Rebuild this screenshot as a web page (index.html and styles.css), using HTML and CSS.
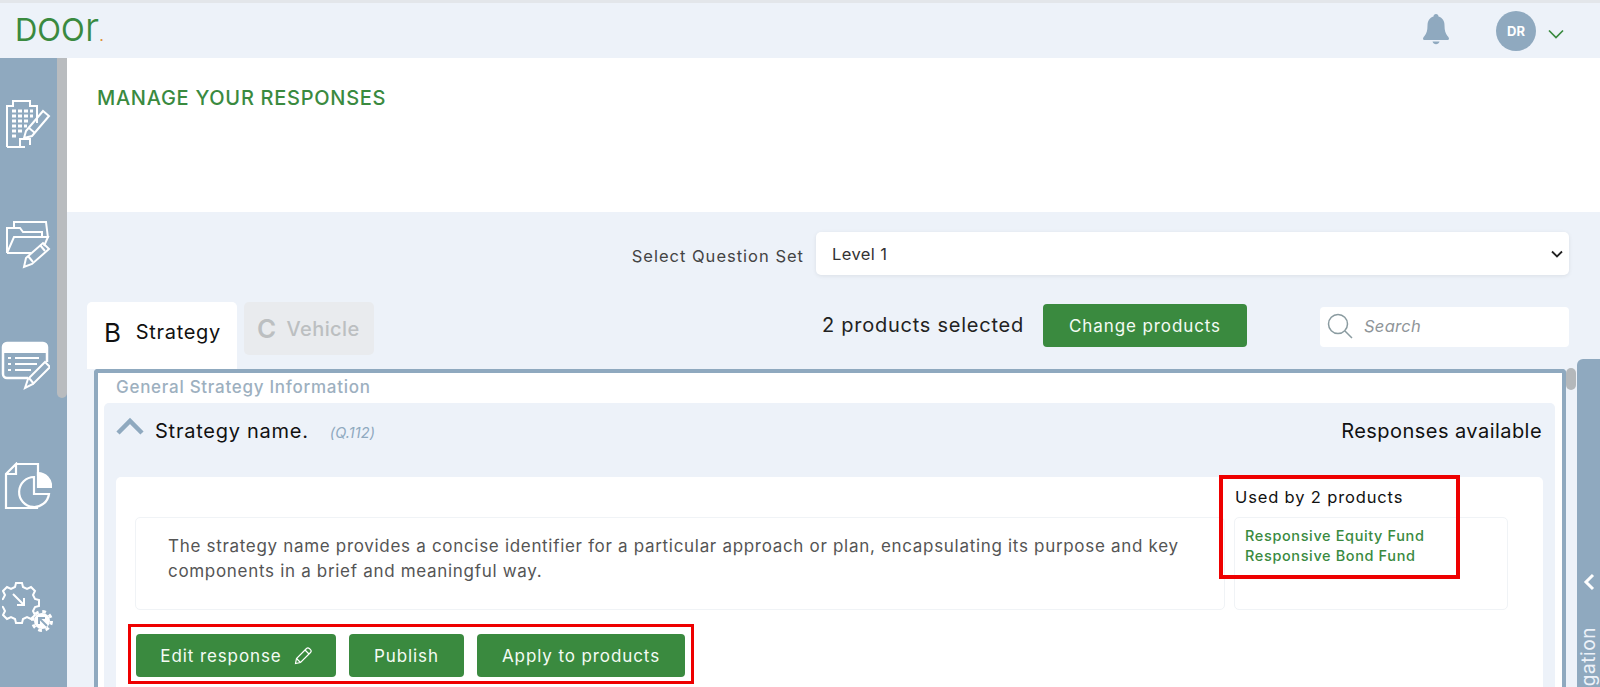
FILE: index.html
```html
<!DOCTYPE html>
<html lang="en">
<head>
<meta charset="utf-8">
<title>Manage your responses</title>
<link rel="stylesheet" href="styles.css">
</head>
<body>
<div class="app">
  <header class="topbar">
    <div class="logo">DOO<span class="logo-r">r</span><span class="logo-dot">.</span></div>
    <div class="top-right">
      <svg class="bell" viewBox="0 0 28 32" width="28" height="32"><path fill="#8fa9bf" d="M14 1c-1.500 0-2.500 1-2.500 2.600C7.500 4.800 5.500 8 5.500 12.500c0 5-1 8-3 10.500-1 1.300-1.500 2-1.500 2.700C1 26.500 1.700 27 3 27h22c1.300 0 2-.5 2-1.300 0-.7-.5-1.400-1.500-2.700-2-2.500-3-5.500-3-10.500 0-4.500-2-7.700-6-8.900C16.500 2 15.500 1 14 1z"/><path fill="#8fa9bf" d="M10.500 28.500h7c-.5 1.700-2 2.800-3.500 2.800s-3-1.100-3.500-2.800z"/></svg>
      <div class="avatar">DR</div>
      <svg class="caret" viewBox="0 0 16 10" width="16" height="10"><path d="M1 1.500l7 7 7-7" fill="none" stroke="#3a8a3f" stroke-width="1.700"/></svg>
    </div>
  </header>
  <div class="body-row">
    <nav class="sidebar">
      <div class="icons">
        <svg viewBox="0 0 46 50" width="46" height="50" fill="none" stroke="#fff" stroke-width="2"><path d="M2 48V7h6V2h17v5h7v17M20 48H2M15 48v-8h10v6"/><path d="M7 12h4M13 12h4M19 12h4M25 12h3M7 17h4M13 17h4M19 17h4M25 17h3M7 22h4M13 22h4M19 22h4M7 27h4M13 27h4M19 27h3M7 32h4M13 32h4M7 37h4" stroke-width="3"/><path d="M21 32L38 12l6 5-17 20-8 2z"/><path d="M24 29l6 5"/></svg>
        <svg viewBox="0 0 46 50" width="46" height="50" fill="none" stroke="#fff" stroke-width="2"><path d="M2 33V8h13l3 4h19v6"/><path d="M2 33h24M9 7V2h32l2 16"/><path d="M2 33l7-16h34l-4 9"/><path d="M19 47l2-9 17-15 6 6-17 15z"/><path d="M23 36l5 6M35 25l5 6"/></svg>
        <svg class="icon-list" viewBox="0 0 50 50" width="50" height="50" fill="none" stroke="#fff" stroke-width="2"><path d="M28 37H7a4 4 0 0 1-4-4V6a4 4 0 0 1 4-4h36a4 4 0 0 1 4 4v15" stroke-width="2.500"/><path d="M4 3h42v9H4z" fill="#fff" stroke="none"/><path d="M8 17h3M8 23h3M8 29h3M15 17h24M15 23h22M15 29h16" stroke-width="2.200"/><path d="M25 47l3-9 17-17 5 5-17 17z"/><path d="M29 37l5 6"/></svg>
        <svg viewBox="0 0 48 48" width="48" height="48" fill="none" stroke="#fff" stroke-width="2.200"><path d="M12 2h22v12M33 36v10H2V12L12 2v10H2"/><path d="M30 15a15 15 0 1 0 15 17H30z" fill="#8fa9bf"/><path d="M34 11a13 13 0 0 1 13 14H34z" fill="#fff" stroke="#fff"/></svg>
        <svg viewBox="0 0 52 52" width="52" height="52" fill="none" stroke="#fff" stroke-width="2"><path d="M14 2h6l1 4 4 2 4-2 4 4-2 4 2 4 4 1v6l-4 1-2 4 2 4-4 4-4-2-4 2-1 4h-6l-1-4-4-2-4 2-4-4 2-4-2-4-4-1v-6l4-1 2-4-2-4 4-4 4 2 4-2z"/><path d="M11 13l11 11M22 17v7h-7"/><circle cx="40" cy="40" r="8" fill="#fff" stroke="none"/><circle cx="40" cy="40" r="9.500" stroke="#fff" stroke-width="3" stroke-dasharray="3.730 3.730"/><path d="M45 45l-8-8M37 43v-6h6" stroke="#8fa9bf"/></svg>
      </div>
      <div class="side-scroll"><div class="side-thumb"></div></div>
    </nav>
    <main class="main">
      <section class="page-head">
        <h1 class="page-title">MANAGE YOUR RESPONSES</h1>
      </section>
      <section class="content">
        <div class="set-row">
          <label class="set-label">Select Question Set</label>
          <div class="set-select">
            <span>Level 1</span>
            <svg viewBox="0 0 12 8" width="12" height="8"><path d="M1 1.500l5 5 5-5" fill="none" stroke="#222" stroke-width="1.800"/></svg>
          </div>
        </div>
        <div class="tab-row">
          <div class="tab tab-active"><b class="tab-letter">B</b>Strategy</div>
          <div class="tab tab-off"><b class="tab-letter">C</b>Vehicle</div>
          <div class="selected">2 products selected</div>
          <button class="btn btn-change">Change products</button>
          <div class="search">
            <svg viewBox="0 0 26 26" width="26" height="26" fill="none" stroke="#8a9ba0" stroke-width="1.500"><circle cx="11" cy="11" r="9.500"/><path d="M18 18l7 7"/></svg>
            <span>Search</span>
          </div>
        </div>
        <div class="panel">
          <div class="panel-inner">
            <div class="section-title">General Strategy Information</div>
            <div class="accordion">
              <div class="acc-head">
                <svg class="acc-chevron" viewBox="0 0 28 18" width="28" height="18"><path d="M2 16L14 4l12 12" fill="none" stroke="#8fa9bf" stroke-width="4.500"/></svg>
                <span class="q-name">Strategy name.</span>
                <em class="q-code">(Q.112)</em>
                <span class="q-status">Responses available</span>
              </div>
              <div class="card">
                <div class="card-row">
                  <div class="desc">The strategy name provides a concise identifier for a particular approach or plan, encapsulating its purpose and key components in a brief and meaningful way.</div>
                  <div class="used">
                    <div class="used-title">Used by 2 products</div>
                    <div class="used-box">Responsive Equity Fund<br>Responsive Bond Fund</div>
                    <div class="red-used"></div>
                  </div>
                </div>
                <div class="actions">
                  <button class="btn btn-edit">Edit response
                    <svg viewBox="0 0 18 18" width="18" height="18" fill="none" stroke="#fff" stroke-width="1.200"><path d="M1.500 16.500l1-5L12.500 1.500a2 2 0 0 1 2.800 0l1.200 1.200a2 2 0 0 1 0 2.800L6.500 15.500z"/><path d="M11 3l4 4M2.500 11.500l4 4"/></svg>
                  </button>
                  <button class="btn btn-publish">Publish</button>
                  <button class="btn btn-apply">Apply to products</button>
                </div>
              </div>
            </div>
          </div>
        </div>
      </section>
      <div class="panel-thumb"></div>
      <aside class="nav-tab">
        <svg viewBox="0 0 12 18" width="12" height="18"><path d="M10 2L3 9l7 7" fill="none" stroke="#fff" stroke-width="3"/></svg>
        <span class="nav-label">Navigation</span>
      </aside>
    </main>
  </div>
</div>
</body>
</html>
```
FILE: styles.css
```css
* { box-sizing: border-box; }
html, body { margin: 0; height: 100%; overflow: hidden; }
body { font-family: Inter, "Open Sans", sans-serif; color: #111; background: #edf2f9; }
button { font-family: inherit; }

.app { display: flex; flex-direction: column; height: 687px; }

.topbar { height: 58px; flex: none; border-top: 3px solid #e3e6ea; background: #edf2f9; display: flex; align-items: center; justify-content: space-between; padding: 0 36px 0 15px; }
.logo { font-size: 31px; line-height: 34px; color: #3a8a3f; font-weight: 400; display: flex; align-items: baseline; }
.logo-r { font-size: 40px; line-height: 34px; font-weight: 300; }
.logo-dot { color: #e0923a; font-size: 16px; }
.top-right { display: flex; align-items: center; }
.bell { margin-right: 46px; margin-top: -4px; }
.avatar { width: 40px; height: 40px; border-radius: 50%; background: #8fa9bf; color: #fff; font-size: 13px; font-weight: 700; display: flex; align-items: center; justify-content: center; margin-right: 12px; }
.caret { margin-top: 6px; }

.body-row { flex: 1; display: flex; min-height: 0; }

.sidebar { width: 67px; flex: none; background: #8fa9bf; display: flex; position: relative; }
.icons { width: 57px; display: flex; flex-direction: column; align-items: center; padding-top: 41px; margin-left: -1px; gap: 71px; position: absolute; left: 0; top: 0; }
.icons svg { flex: none; }
.icons .icon-list { margin-left: -5px; }
.side-scroll { position: absolute; right: 0; top: 0; width: 10px; height: 100%; }
.side-thumb { height: 340px; background: #b9bcbf; border-radius: 0 0 5px 5px; }

.main { flex: 1; min-width: 0; position: relative; display: flex; flex-direction: column; }
.page-head { height: 154px; flex: none; background: #fff; padding: 28px 30px 0; }
.page-title { margin: 0; font-size: 20px; line-height: 24px; font-weight: 500; color: #3a8a3f; letter-spacing: .72px; white-space: nowrap; }

.content { flex: 1; min-height: 0; padding: 20px 31px 0 20px; overflow: hidden; }

.set-row { display: flex; justify-content: flex-end; align-items: center; gap: 12px; height: 43px; }
.set-label { font-size: 16.500px; letter-spacing: 1px; color: #444; padding-top: 4px; white-space: nowrap; }
.set-select { width: 753px; height: 43px; background: #fff; border-radius: 5px; box-shadow: 0 1px 4px rgba(0,0,0,.08); display: flex; align-items: center; justify-content: space-between; padding: 0 6px 0 16px; font-size: 16.500px; letter-spacing: .4px; color: #333; }

.tab-row { display: flex; align-items: flex-start; margin-top: 27px; height: 67px; }
.tab { display: flex; align-items: center; font-size: 20px; border-radius: 5px 5px 0 0; padding-left: 17px; }
.tab-letter { font-weight: 400; font-size: 26px; margin-right: 14px; }
.tab-active { width: 150px; height: 60px; background: #fff; color: #111; letter-spacing: .7px; box-shadow: 0 7px 0 #fff; }
.tab-off { width: 130px; height: 53px; margin-left: 7px; background: #e9ebee; color: #bcbfc1; font-weight: 500; border-radius: 5px; padding-left: 13px; letter-spacing: .4px; }
.tab-off .tab-letter { font-weight: 600; margin-right: 10px; }
.selected { margin-left: 448px; width: 221px; font-size: 20px; letter-spacing: .75px; line-height: 47px; color: #222; white-space: nowrap; }
.btn { border: 0; background: #3a8a3f; color: #f4fbf4; font-size: 17px; letter-spacing: .9px; border-radius: 4px; height: 43px; padding: 0; display: flex; align-items: center; justify-content: center; white-space: nowrap; }
.btn-change { width: 204px; margin-top: 2px; }
.search { width: 249px; height: 40px; margin-left: 73px; margin-top: 5px; background: #fff; border-radius: 4px; display: flex; align-items: center; padding: 0 0 2px 7px; gap: 11px; font-style: italic; font-size: 16.500px; letter-spacing: .3px; color: #8f9599; }

.panel { width: 1472px; margin-left: 7px; height: 340px; border: 4px solid #8fa9bf; border-bottom: 0; border-radius: 4px 4px 0 0; background: #fff; }
.panel-inner { padding: 0 7px 0 6px; }
.section-title { height: 30px; line-height: 28px; padding-left: 12px; font-size: 17px; font-weight: 500; letter-spacing: .72px; color: #9db0bf; white-space: nowrap; }
.accordion { background: #edf2f9; border-radius: 5px 5px 0 0; padding: 0 12px; height: 300px; }
.acc-head { height: 74px; display: flex; align-items: center; padding: 0 0 18px 0; }
.acc-chevron { flex: none; margin-top: -10px; }
.q-name { font-size: 20px; letter-spacing: .75px; margin-left: 11px; color: #111; }
.q-code { font-size: 14.500px; color: #8fa9bf; margin-left: 21px; padding-top: 2px; letter-spacing: .1px; }
.q-status { margin-left: auto; font-size: 20px; letter-spacing: .45px; color: #111; padding-right: 1px; white-space: nowrap; }
.card { background: #fff; border-radius: 5px; height: 226px; padding: 40px 0 0 19px; }
.card-row { display: flex; gap: 9px; height: 93px; }
.desc { width: 1090px; border: 1px solid #f0f3f6; border-radius: 5px; padding: 16px 30px 0 32px; font-size: 17px; letter-spacing: .69px; line-height: 25px; color: #555; }
.used { width: 274px; position: relative; border: 1px solid #f0f3f6; border-radius: 5px; padding: 8px 0 0 10px; font-size: 14.500px; letter-spacing: .62px; line-height: 20px; color: #3a8a3f; }
.used-title { position: absolute; left: 0; top: -32px; font-size: 16.500px; letter-spacing: .85px; line-height: 22px; color: #111; white-space: nowrap; }
.used-box { font-weight: 500; white-space: nowrap; }
.red-used { position: absolute; left: -16px; top: -43px; width: 241px; height: 104px; border: 4px solid #e00; pointer-events: none; }
.actions { display: flex; gap: 13px; margin: 14px 0 0 -7px; width: 566px; height: 60px; border: 3px solid #e00; padding: 7px 5px; }
.btn-edit { width: 200px; gap: 12px; }
.btn-publish { width: 115px; }
.btn-apply { width: 208px; }

.panel-thumb { position: absolute; left: 1499px; top: 310px; width: 10px; height: 22px; background: #b4b8bb; border-radius: 5px; }
.nav-tab { position: absolute; right: 0; top: 301px; width: 23px; height: 328px; background: #8fa9bf; border-radius: 6px 0 0 0; overflow: hidden; }
.nav-tab svg { position: absolute; left: 6px; top: 214px; }
.nav-label { position: absolute; left: 0; top: 268px; writing-mode: vertical-rl; transform: rotate(180deg); color: #edf2f9; font-size: 19px; letter-spacing: .6px; line-height: 23px; white-space: nowrap; }
```
